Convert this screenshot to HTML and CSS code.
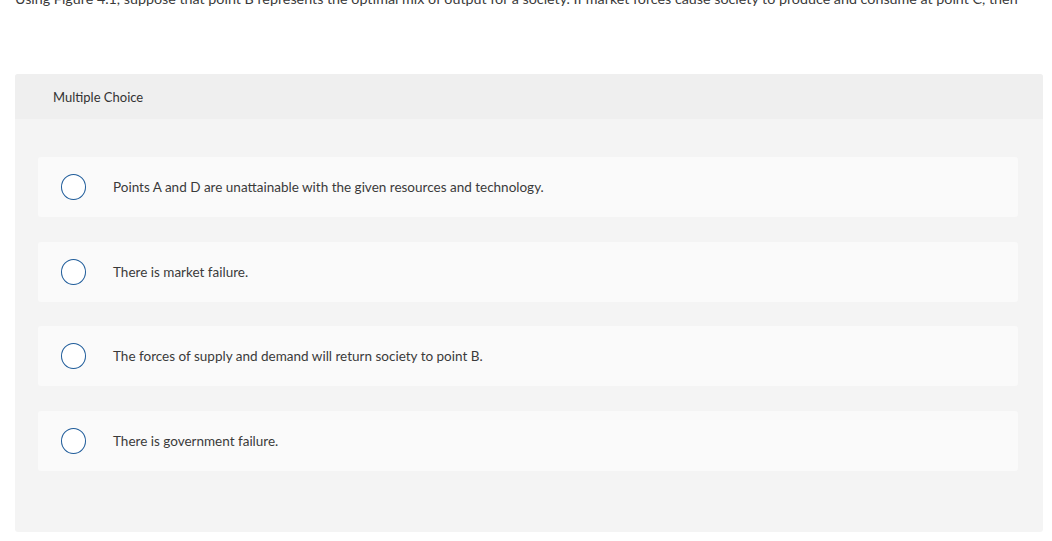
FILE: index.html
```html
<!DOCTYPE html>
<html>
<head>
<meta charset="utf-8">
<link rel="stylesheet" href="styles.css">
</head>
<body>
<p class="question">Using Figure 4.1, suppose that point B represents the optimal mix of output for a society. If market forces cause society to produce and consume at point C, then</p>
<section class="mc">
  <div class="mc-head">Multiple Choice</div>
  <div class="mc-body">
    <div class="option"><span class="radio"></span><span class="label">Points A and D are unattainable with the given resources and technology.</span></div>
    <div class="option"><span class="radio"></span><span class="label">There is market failure.</span></div>
    <div class="option"><span class="radio"></span><span class="label">The forces of supply and demand will return society to point B.</span></div>
    <div class="option"><span class="radio"></span><span class="label">There is government failure.</span></div>
  </div>
</section>
</body>
</html>
```
FILE: styles.css
```css
html, body {
  margin: 0;
  padding: 0;
  background: #ffffff;
}
body {
  font-family: Lato, "Open Sans", sans-serif;
  color: #333333;
  padding: 0 9px 0 15px;
}
.question {
  margin: -11px 0 0 0;
  font-size: 14.3px;
  line-height: 20px;
  color: #3a3a3a;
  white-space: nowrap;
  height: 85px;
}
.mc {
  width: 1028px;
  background: #f4f4f4;
  border-radius: 3px;
}
.mc-head {
  background: #efefef;
  height: 45px;
  display: flex;
  align-items: center;
  padding-left: 38px;
  font-size: 13px;
  color: #333;
  border-radius: 3px 3px 0 0;
}
.mc-body {
  padding: 38px 25px 61px 23px;
  display: flex;
  flex-direction: column;
  gap: 24.5px;
}
.option {
  height: 60px;
  background: #fafafa;
  border-radius: 3px;
  display: flex;
  align-items: center;
}
.radio {
  width: 23px;
  height: 24px;
  border: 1.5px solid #1f5c9a;
  border-radius: 50%;
  margin-left: 23px;
  margin-right: 27px;
  flex: none;
  background: #fff;
}
.label {
  font-size: 13.5px;
  color: #3a3a3a;
}
```
